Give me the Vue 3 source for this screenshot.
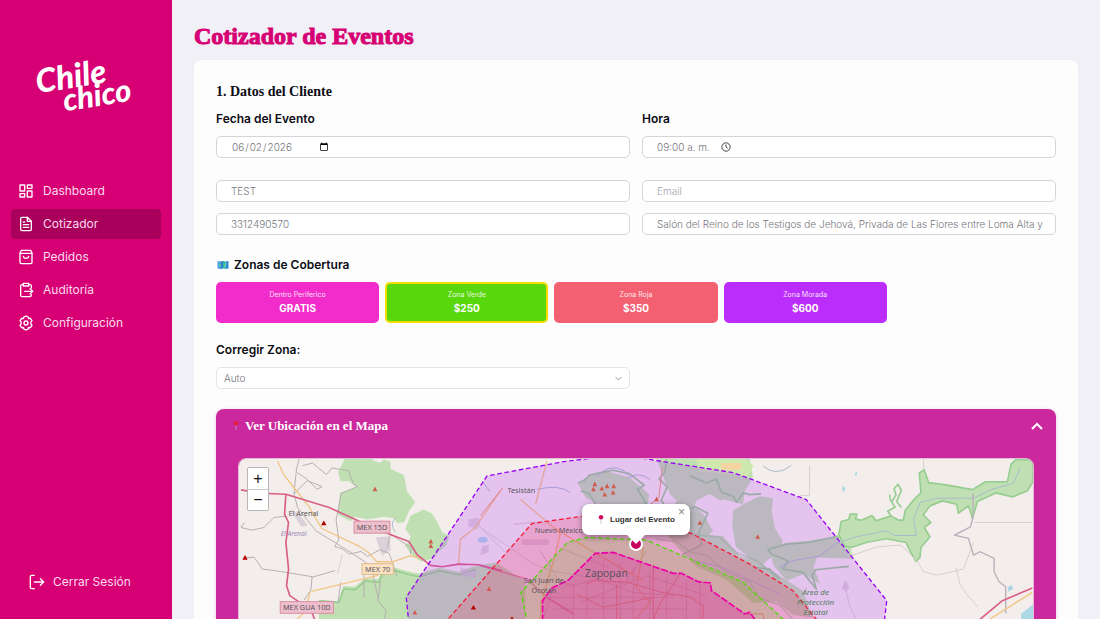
<script setup>
import { ref } from 'vue'

const nav = [
  { name: 'Dashboard', icon: ['M3 3h7v9H3z', 'M14 3h7v5h-7z', 'M14 12h7v9h-7z', 'M3 16h7v5H3z'] },
  { name: 'Cotizador', active: true, icon: ['M14 2H6a2 2 0 0 0-2 2v16a2 2 0 0 0 2 2h12a2 2 0 0 0 2-2V8z', 'M14 2v6h6', 'M8 9h2', 'M8 13h8', 'M8 17h8'] },
  { name: 'Pedidos', icon: ['M5 2h14l2 4v14a2 2 0 0 1-2 2H5a2 2 0 0 1-2-2V6z', 'M3 6.500h18', 'M8 11c1 4 7 4 8 0'] },
  { name: 'Auditoría', icon: ['M8 4H6a2 2 0 0 0-2 2v14a2 2 0 0 0 2 2h12a2 2 0 0 0 2-2v-1', 'M16 4h2a2 2 0 0 1 2 2v3', 'M8 2h8v4H8z', 'M10 14h12', 'M18 10l4 4-4 4'] },
  { name: 'Configuración', icon: ['M12 1.500l3 1.200.8 2.600 2.700-.4 2.500 3.600-1.700 2.200v2.600l1.700 2.200-2.500 3.600-2.700-.4-.8 2.600-3 1.200-3-1.200-.8-2.600-2.700.4L3 15.500l1.700-2.200v-2.600L3 8.500l2.500-3.600 2.700.4.8-2.600z', 'M12 9a3 3 0 1 0 0 6 3 3 0 0 0 0-6z'] }
]

const zones = [
  { name: 'Dentro Periferico', price: 'GRATIS', kind: 'inner' },
  { name: 'Zona Verde', price: '$250', kind: 'green' },
  { name: 'Zona Roja', price: '$350', kind: 'red' },
  { name: 'Zona Morada', price: '$600', kind: 'purple' }
]

const peaks = [
  [279, 217], [42, 321], [729, 471], [845, 505]
]
const hills = [
  [433, 115], [601, 272], [601, 286], [776, 415], [553, 486],
  [1094, 100], [1090, 115], [1115, 113], [1131, 106], [1151, 106], [1149, 125], [1124, 131], [1280, 145], [1410, 216], [1584, 258]
]

const canyon = [
  [1828, 252], [1835, 212], [1858, 206], [1862, 190], [1882, 190], [1878, 205], [1895, 208], [1928, 194], [1940, 210],
  [1985, 195], [2008, 208], [2022, 208], [2028, 178], [2052, 148], [2075, 125], [2070, 66], [2085, 56], [2098, 95],
  [2150, 102], [2230, 116], [2268, 93], [2335, 92], [2346, 40], [2360, 26], [2412, 26], [2412, 92], [2395, 120],
  [2350, 138], [2300, 126], [2245, 152], [2230, 202], [2218, 165], [2188, 187], [2182, 160], [2140, 150], [2102, 165],
  [2082, 192], [2105, 215], [2085, 230], [2102, 258], [2075, 290], [2072, 320], [2060, 332], [2042, 300], [2030, 275],
  [1970, 264], [1910, 275], [1865, 290], [1845, 285]
]
const canyonPoints = canyon.map((p) => p.join()).join(' ')

const date = ref('2026-06-02')
const time = ref('09:00 a. m.')
const client = ref('TEST')
const email = ref('')
const phone = ref('3312490570')
const address = ref('Salón del Reino de los Testigos de Jehová, Privada de Las Flores entre Loma Alta y Loma Baja')
const zone = ref('Auto')
const selected = ref('green')
const mapOpen = ref(true)
const popupOpen = ref(true)
</script>

<template>
  <div class="layout">
    <aside class="sidebar">
      <svg class="logo" viewBox="0 0 100 60" role="img" aria-label="Chile chico">
        <g transform="rotate(-9 50 30)">
          <text x="3" y="30" font-size="33">Chile</text>
          <text x="27" y="52" font-size="31">chico</text>
        </g>
      </svg>
      <nav class="menu">
        <a v-for="item in nav" :key="item.name" href="#" class="menu-item" :class="{ active: item.active }">
          <svg class="icon" viewBox="0 0 24 24"><path v-for="d in item.icon" :key="d" :d="d" /></svg>
          <span>{{ item.name }}</span>
        </a>
      </nav>
      <button type="button" class="logout">
        <svg class="icon" viewBox="0 0 24 24"><path d="M8 2H4a2 2 0 0 0-2 2v16a2 2 0 0 0 2 2h4M8 12h14M17 7l5 5-5 5" /></svg>
        <span>Cerrar Sesión</span>
      </button>
    </aside>

    <main class="content">
      <h1>Cotizador de Eventos</h1>
      <section class="card">
        <h2>1. Datos del Cliente</h2>
        <div class="grid when">
          <div class="field">
            <label for="fecha">Fecha del Evento</label>
            <input id="fecha" v-model="date" type="date">
          </div>
          <div class="field">
            <label for="hora">Hora</label>
            <div class="time-box">
              <input id="hora" v-model="time" type="text">
              <svg class="clock" viewBox="0 0 24 24"><circle cx="12" cy="12" r="10" /><path d="M12 6v6l4 3" /></svg>
            </div>
          </div>
        </div>
        <div class="grid">
          <input v-model="client" type="text" aria-label="Nombre">
          <input v-model="email" type="email" placeholder="Email" aria-label="Email">
          <input v-model="phone" type="tel" aria-label="Teléfono">
          <input v-model="address" type="text" aria-label="Dirección">
        </div>

        <h3>
          <svg class="map-icon" viewBox="0 0 24 20">
            <path d="M1 2l5.500 1v15L1 17z" fill="#4aa3df" /><path d="M6.500 3L12 2v15l-5.500 1z" fill="#2b7cc9" />
            <path d="M12 2l5.500 1v15L12 17z" fill="#35b9a5" /><path d="M17.500 3L23 2v15l-5.500 1z" fill="#2c87d6" />
            <path d="M3 7l4 2 2 5-4-2zM13 12l4-6 3 1-4 6z" fill="#67cf9a" />
          </svg>
          Zonas de Cobertura
        </h3>
        <div class="zones">
          <button
            v-for="z in zones" :key="z.kind" type="button" class="zone"
            :class="[z.kind, { selected: selected === z.kind }]" @click="selected = z.kind"
          >
            <span>{{ z.name }}</span>
            <strong>{{ z.price }}</strong>
          </button>
        </div>

        <div class="grid">
          <div class="field">
            <label for="zona">Corregir Zona:</label>
            <div class="select-box">
              <select id="zona" v-model="zone">
                <option>Auto</option>
                <option v-for="z in zones" :key="z.kind">{{ z.name }}</option>
              </select>
              <svg class="caret" viewBox="0 0 12 12"><path d="M2 4l4 4 4-4" /></svg>
            </div>
          </div>
        </div>

        <div class="map-panel">
          <button type="button" class="map-header" :aria-expanded="mapOpen" @click="mapOpen = !mapOpen">
            <svg class="pin" viewBox="0 0 8 14"><path d="M4 6v7" stroke="#b5a7c9" stroke-width="1" /><circle cx="4" cy="4" r="3" fill="#e3203c" /></svg>
            <span>Ver Ubicación en el Mapa</span>
            <svg class="chevron" viewBox="0 0 12 12"><path d="M1 9l5-5 5 5" /></svg>
          </button>
          <div v-if="mapOpen" class="map">
            <svg class="tiles" viewBox="24 24 2388 960" preserveAspectRatio="xMidYMin slice">
              <rect width="2500" height="1000" fill="#f3eeeb" />
              <!-- parks -->
              <g fill="#c0dfb2">
                <path d="M342 24l-20 40 8 28 24-2 24 20-50 15-8 65 40 22 10-14 40 8 50-8 30 4 10 15 22-4 12-30 20-30-24-30-10-50-40-20v-20l-20-8-10 10-20-6-20-17z" />
                <path d="M540 195l-16 40 16 22-6 18-12 8 22 30 28 20 36-10 20-24 20-15 8-30-20-8-20-40-12-18-25-12z" />
                <path d="M330 430l8-24 35 2 30-26 40 4 12-26 36-10 34 10 40 9 60-18 60 12 50-18 60-10 90 55v600H330l-70-60 5-480 60 5z" />
                <path d="M1043 96l35-22 50-14 70 20 60 50-10 60-70-20-60-8-50-20z" />
                <path d="M1280 24h280l10 55-30 50-70 20-30-20-40 20-30 80-30 30-20-20 20-40-14-20 14-30-20-20z" />
                <path d="M1510 180l30-20 50-24 40 6-4 40 10 50 24 40-12 30-40 30-20 30-40-50-30-25-10-60z" />
                <path d="M1360 40l60-10 70 40 60 10-10 80-80-20-60-30zM1370 150l50 40 30 50-40 40-60-60z" />
                <path d="M1260 190l60 8 80 50 80 8 50 60 60 20 70 45 60 40 30 80-60-8-50-40-70 4-80-70-90-40-60-60z" />
                <path d="M1620 300l50-24 70-6 90-14 32 32 10 36-110-4-10 30 20 50-50-30-50 20-40-45z" />
                <polygon :points="canyonPoints" />
              </g>
              <path d="M1398 24h150l24 20-20 36-30-8-110-10z" fill="#cee8af" />
              <path d="M1474 36h60v20h-60z" fill="#f5d3a0" />
              <!-- park edges and canyon -->
              <g class="edge">
                <path d="M265 450l60 5 14-40 35 2 30-26 40 4 12-26 36-10 34 10 40 9 60-18 60 12 50-16" />
                <path d="M1043 96l20-8 15-16 20-4 50-10 50 10 45 35-20 12 35 60 40 8-5 40M1052 120l25 8 20 32 60 8 20 25" />
                <path d="M1310 24l-5 40-18 20 25 24-18 40 20 30 50 5 30-16 40 20-28 60 10 35-60 30M1380 74l50 22 30-12 15 40 35 12 10 18 20-28 20 5 34-2" />
                <path d="M1625 310l-10-14 55-16 65-5 93-19M1625 310l50 20-15 25 60 10 40 50-12-42 10-16 100-10M1650 385l-30-30-50-5" />
                <polygon :points="canyonPoints" />
                <path d="M1985 195l-10-14 22-12-14-22-2-16M2016 170l-14-18 14-34-10-18-12 14 6 18-12 20" />
                <path d="M1280 265l60 8 40 30 50 10 60 50 70 30 30 50 60 20 40 44" opacity=".6" />
                <path d="M1390 250l80 10 50 45 60 25 40 30 30 36" opacity=".6" />
              </g>
              <path class="water" d="M1100 78q35-42 80-20l20 22q25-20 60 6M495 200q-20 20 0 45M755 90l24 32M1600 45q40 35 85-2M920 115q70-15 100 10M1390 330q70 12 110 30l150 70M1650 350l40-20 80-14 50-38 60-20 90-18 25 14h66l-8-50 20-50 50-12 110 0 50-25 70-20 20-45" />
              <g fill="#add9e6">
                <path d="M1838 108l6-2 4 10-9 8zM1876 68l5-6 3 8-7 5zM2336 410l12-7 5 12-15 8zM2376 490l38-30v60h-38z" />
                <ellipse cx="757" cy="267" rx="15" ry="9" />
              </g>
              <g fill="#cdbfce" opacity=".6">
                <path d="M715 205l30-4 4 22-12 12-24-10zM755 286l20-4v22l-25 10zM690 350l50 12-6 20-40-8zM875 265l80 0 2 18-82 0zM1850 390l10 20-10 14-14-12zM180 175l25 15 26 35-20 2-20-30z" />
                <path d="M435 260l40-4 6 40-26 20z" />
              </g>
              <!-- minor roads -->
              <g class="track">
                <path d="M205 24l-8 30-8 75 40-40 45 18-15 8-30-30-30-20M215 44l30-8 42 35 16-20 50 8 15 40 12 8-48 20-16 80 8 60-12 20 24 8 20 15 35-8 20 15 36-20 28 10 4 10 20 60" />
                <path d="M40 215l-10 15 34 8 35-8 30-30 35-4M42 320h28l24 35 40 5 50 8 60 10-4 40-20 30M242 380l70-20M400 350v90M330 395l-8 60M470 290l10-40 60 40v20M450 390l-8 60 24 30-4 25" />
                <path d="M190 130l10 40 55 70 90 55 60 40 18 20 20 90" />
              </g>
              <g class="thin">
                <path d="M335 310l-15 60M745 225l80 80M750 230l160 110 55 20 220 40M1740 44v90h-30M2083 24v30M1855 318l90-30 70-5 50 50 18 30 40 10 80-18 30-80M2180 350l12 50 20 30 35 40M2236 215h175M1842 390l20 80 20 40" />
              </g>
              <path class="border" d="M2232 128v70l-8 30-48 25 42 10 15 50 20-10 42 20v40l15 30 20 15v80" />
              <g class="thin urban">
                <path d="M965 385l60 20 80-20 100 40 130 10M950 440h380M970 475h400M1030 400v120M1070 390v140M1120 330v190M1170 335v180M1210 350v180M1260 360v160M1310 380v140M1370 390v130M1410 400v120M1050 455l200-80 180 60M930 300l50 80-40 120M985 290l150 60M850 220l90-8M1250 300l-60 90" />
              </g>
              <!-- secondary roads -->
              <g class="secondary">
                <path d="M140 30l18 40 35 45 40 50 40 68 110 52 30 20 25 28h50l50-18 35 8" />
                <path d="M242 422l200-48M238 422l-14 60-26 25M2410 425l-130 82" />
                <path d="M810 120l-75 110-45 35-6 75M950 30l-34 130M870 145l100 85 20 20-20 80-38 130v60M970 230l130 80 140 80M1240 290l-20 120 40 45-50 60" />
              </g>
              <g class="urban-main">
                <path d="M750 195l68-85M1297 50l-10 90-50 40M1070 400l20-10 100 4 100 30 90 15 40 25v40M1270 340v180M1350 370l-60 90-30 70M1040 430l80 40 150-30M1160 400v120M1550 490h50l4 30" />
              </g>
              <!-- highways -->
              <g class="highway">
                <path d="M30 117l60 10 75 3 130 40 150 68 90 34 25 40 40 32 35 4 50-8 60 2 70 18" />
                <path d="M165 130l-4 60 12 25-8 60 8 80-6 50 10 30 65 45 12 35M2410 412l-90 38-72 60" />
                <path d="M750 345l140 40 60 55 80 50" opacity=".6" />
              </g>
              <!-- coverage zones -->
              <path class="area purple" d="M535 520l-8-80 243-365 230-43 130-16h70l310 49 220 81 242 304-10 90-120 400H600z" />
              <path class="area red" d="M640 520l110-125 155-177 175-25 130 5 175 50 175 92 130 80 80 98-100 400H700z" />
              <path class="area green" d="M892 520l-20-95 140-150 58-15 180 8 290 127 125 115-80 400H930z" />
              <path class="area inner" d="M937 540v-90l28-38 50-24 80-80 55-3 180 63h25l50 25 37 4 3 23 100 70 15-5 40 55v400H937z" />
              <g fill="#b50000"><path v-for="p in peaks" :key="p.join()" :d="`M${p[0] - 8} ${p[1] + 6}h16l-8-14z`" /></g>
              <g fill="#d05a4d"><path v-for="p in hills" :key="p.join()" :d="`M${p[0] - 7} ${p[1] + 6}h14l-7-14z`" /></g>
              <g class="shield"><rect x="370" y="211" width="108" height="36" /><rect x="148" y="453" width="160" height="35" /></g>
              <rect class="shield-tan" x="394" y="339" width="94" height="32" />
              <g class="places">
                <text x="424" y="237">MEX 15D</text>
                <text x="228" y="478">MEX GUA 10D</text>
                <text x="441" y="363">MEX 70</text>
                <text x="218" y="196">El Arenal</text>
                <text x="873" y="126">Tesistán</text>
                <text x="986" y="247">Nuevo México</text>
                <text x="941" y="397">San Juan de</text>
                <text x="941" y="426">Ocotán</text>
                <text class="city" x="1129" y="380">Zapopan</text>
                <text class="station" x="188" y="255">El Arenal</text>
                <g class="reserve">
                  <text x="1758" y="434">Área de</text>
                  <text x="1758" y="464">Protección</text>
                  <text x="1758" y="494">Estatal</text>
                </g>
              </g>
            </svg>
            <div class="zoom">
              <button type="button" aria-label="Acercar">+</button>
              <button type="button" aria-label="Alejar">−</button>
            </div>
            <span class="marker"></span>
            <div v-if="popupOpen" class="popup">
              <svg class="pin" viewBox="0 0 8 14"><path d="M4 6v7" stroke="#c7bccb" stroke-width="1" /><circle cx="4" cy="4" r="3" fill="#d20a63" /></svg>
              Lugar del Evento
              <button type="button" class="close" aria-label="Cerrar" @click="popupOpen = false">×</button>
            </div>
          </div>
        </div>
      </section>
    </main>
  </div>
</template>

<style>
body {
  margin: 0;
}
</style>

<style scoped>
* {
  box-sizing: border-box;
}
.layout {
  display: flex;
  height: 100vh;
  overflow: hidden;
  background: #f1f0f7;
  font-family: Inter, "Open Sans", sans-serif;
  color: #0c0c14;
}
button, input, select {
  font-family: inherit;
}
svg {
  display: block;
  flex: none;
}
.sidebar {
  width: 172px;
  flex: none;
  display: flex;
  flex-direction: column;
  padding: 56px 11px 22px;
  background: #d60074;
}
.logo {
  width: 100px;
  height: 60px;
  margin: 0 0 60px 23px;
  overflow: visible;
  fill: #fff;
  font-family: Lato, sans-serif;
  font-style: italic;
  font-weight: 900;
}
.menu {
  display: flex;
  flex-direction: column;
  gap: 3px;
}
.menu-item {
  display: flex;
  align-items: center;
  gap: 9px;
  height: 30px;
  padding: 0 7px;
  border-radius: 4px;
  color: #fbdcec;
  font-size: 12px;
  line-height: 16px;
  text-decoration: none;
}
.menu-item.active {
  background: #a8005b;
}
.icon {
  width: 16px;
  height: 16px;
  fill: none;
  stroke: #fff;
  stroke-width: 2;
  stroke-linejoin: round;
  stroke-linecap: round;
}
.logout {
  display: flex;
  align-items: center;
  gap: 8px;
  height: 30px;
  margin-top: auto;
  padding: 0 18px;
  border: 0;
  background: none;
  color: #fbdcec;
  font-size: 12px;
  line-height: 16px;
}
.content {
  flex: 1;
  min-width: 0;
  padding: 20px 22px;
  overflow-y: auto;
  scrollbar-width: none;
}
h1, h2, h3 {
  margin: 0;
}
h1 {
  color: #d60074;
  font: 700 24px/32px "Liberation Serif", serif;
  -webkit-text-stroke: 1px #d60074;
}
.card {
  margin-top: 8px;
  padding: 22px;
  border-radius: 8px;
  background: #fefdfe;
}
h2 {
  font: 700 14px/20px "Liberation Serif", serif;
}
.grid {
  display: grid;
  grid-template-columns: 1fr 1fr;
  gap: 11px 12px;
}
.when {
  margin: 8px 0 22px;
}
.field {
  min-width: 0;
}
label {
  display: block;
  margin-bottom: 8px;
  font-size: 12px;
  line-height: 18px;
  font-weight: 600;
}
input, select {
  display: block;
  width: 100%;
  height: 22px;
  padding: 0 9px 0 14px;
  border: 1px solid #d6d4da;
  border-radius: 5px;
  background: #fff;
  color: #77757c;
  font-size: 10px;
  font-weight: 300;
}
input::placeholder {
  color: #a6a4aa;
}
input::-webkit-datetime-edit {
  flex: none;
  width: 85px;
}
input::-webkit-calendar-picker-indicator {
  width: 10px;
  height: 10px;
  padding: 0;
  margin: 0 0 0 10px;
}
.time-box, .select-box {
  position: relative;
}
.clock {
  position: absolute;
  left: 79px;
  top: 6px;
  width: 10px;
  height: 10px;
  fill: none;
  stroke: #222;
  stroke-width: 2;
}
h3 {
  display: flex;
  align-items: center;
  gap: 4px;
  margin: 21px 0 8px;
  font-size: 12px;
  line-height: 18px;
  font-weight: 600;
}
.map-icon {
  width: 14px;
  height: 10px;
}
.zones {
  display: grid;
  grid-template-columns: repeat(5, 1fr);
  gap: 6px;
  margin-bottom: 18px;
}
.zone {
  display: flex;
  flex-direction: column;
  align-items: center;
  justify-content: center;
  height: 41px;
  padding: 0 0 2px;
  border: 2px solid transparent;
  border-radius: 5px;
  color: #fff;
  font-size: 7px;
  line-height: 12px;
}
.zone span {
  opacity: .85;
}
.zone strong {
  font-size: 10px;
  line-height: 14px;
}
.zone.inner { background-color: #f22bcb; }
.zone.green { background-color: #59d70d; }
.zone.red { background-color: #f36072; }
.zone.purple { background-color: #bb2dfa; }
.zone.selected { border-color: #f5dc00; }
select {
  appearance: none;
  padding-left: 7px;
  border-color: #e4e3e7;
}
.caret {
  position: absolute;
  right: 7px;
  top: 7px;
  width: 9px;
  height: 9px;
  fill: none;
  stroke: #77757c;
  stroke-width: 1;
}
.map-panel {
  margin-top: 20px;
  padding: 0 22px 22px;
  border-radius: 8px;
  background: #cc289d;
  box-shadow: 0 1px 4px #cc289d44;
}
.map-header {
  display: flex;
  align-items: center;
  gap: 6px;
  width: 100%;
  height: 33px;
  margin-bottom: 16px;
  padding: 0;
  border: 0;
  background: none;
  color: #fff;
  font: 700 13px/20px "Liberation Serif", serif;
  text-align: left;
}
.map-header span {
  flex: 1;
}
.pin {
  width: 6px;
  height: 11px;
}
.chevron {
  width: 12px;
  height: 12px;
  fill: none;
  stroke: #fff;
  stroke-width: 1;
}
.map-header .chevron {
  margin-right: -9px;
  stroke-width: 2;
}
.map-header .pin {
  margin-left: -5px;
}
.map {
  position: relative;
  height: 320px;
  overflow: hidden;
  border: 1px solid #e2bcd7;
  border-radius: 8px;
}
.tiles {
  width: 100%;
  height: 100%;
}
.edge, .water, .track, .thin, .border, .secondary, .urban-main, .highway {
  fill: none;
  stroke-linejoin: round;
}
.edge { stroke: #98cd91; stroke-width: 5; }
.water { stroke: #a9bccb; stroke-width: 3; }
.track { stroke: #b5b0b3; stroke-width: 3; }
.thin { stroke: #d6cfce; stroke-width: 3; }
.border { stroke: #b8adba; stroke-width: 4; }
.urban { stroke: #cdb0a6; stroke-width: 2; }
.secondary { stroke: #f2c585; stroke-width: 4; }
.urban-main { stroke: #f0997b; stroke-width: 3; }
.highway { stroke: #d95f86; stroke-width: 5; }
.area {
  stroke-width: 4;
  stroke-dasharray: 14 8;
}
.area.purple { fill: rgba(172, 28, 250, .2); stroke: #9a00f5; }
.area.red { fill: rgba(245, 40, 80, .2); stroke: #f5203d; }
.area.green { fill: rgba(110, 190, 20, .2); stroke: #55d80c; }
.area.inner { fill: rgba(235, 0, 165, .28); stroke: #ee00a8; stroke-width: 5; stroke-dasharray: 22 5; }
.shield { fill: #edbecb; stroke: #d98ea5; stroke-width: 3; }
.shield-tan { fill: #fae2c3; stroke: #dfb98b; stroke-width: 3; }
.places {
  fill: #5b535b;
  font: 22px "Noto Sans", sans-serif;
  text-anchor: middle;
}
.city { font-size: 31px; }
.station { fill: #9c87ba; font-size: 20px; font-style: italic; }
.reserve { fill: #527a5e; font-size: 24px; font-style: italic; }
.zoom {
  position: absolute;
  left: 8px;
  top: 8px;
  width: 22px;
  border: 1px solid #b9b5b6;
  border-radius: 2px;
  overflow: hidden;
}
.zoom button {
  display: block;
  width: 100%;
  height: 21px;
  padding: 0;
  border: 0;
  background: #fff;
  color: #111;
  font: 16px/20px "Liberation Sans", sans-serif;
}
.zoom button + button {
  border-top: 1px solid #ccc;
}
.marker {
  position: absolute;
  left: 50%;
  top: 78px;
  width: 14px;
  height: 14px;
  margin-left: -7px;
  border: 2px solid #fff;
  border-radius: 50%;
  background: #c9005f;
}
.popup {
  position: absolute;
  left: 50%;
  top: 45px;
  display: flex;
  align-items: center;
  gap: 6px;
  height: 31px;
  margin-left: -54px;
  padding: 0 15px 0 16px;
  border-radius: 7px;
  background: #fff;
  box-shadow: 0 2px 6px #0006;
  color: #333;
  font: 700 8px/12px "Liberation Sans", sans-serif;
  white-space: nowrap;
}
.popup::after {
  content: "";
  position: absolute;
  left: 50%;
  top: 100%;
  margin-left: -9px;
  border: 9px solid transparent;
  border-top-color: #fff;
  border-bottom: 0;
}
.close {
  position: absolute;
  right: 5px;
  top: 3px;
  padding: 0;
  border: 0;
  background: none;
  color: #888;
  font: 12px/10px "Liberation Sans", sans-serif;
}
</style>
